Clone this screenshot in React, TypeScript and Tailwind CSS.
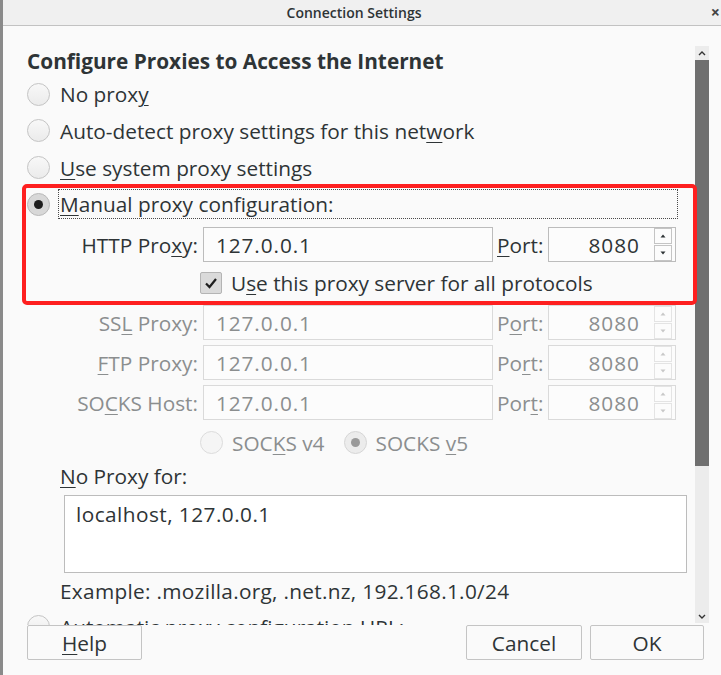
import React from "react";

const FONT = "font-['Open_Sans','Noto_Sans',sans-serif]";

function M({ children }: { children: React.ReactNode }) {
  return <span className="underline decoration-1 underline-offset-[3px]">{children}</span>;
}

function Radio({ checked = false, disabled = false }: { checked?: boolean; disabled?: boolean }) {
  const skin = disabled
    ? checked
      ? "border-[#d6d6d6] bg-[#ececec]"
      : "border-[#dcdcdc] bg-[#f5f5f5]"
    : checked
      ? "border-[#b9b9b9] bg-[#d8d8d8]"
      : "border-[#c4c4c4] bg-linear-to-b from-[#f8f8f8] to-[#ebebeb]";
  return (
    <span className={`flex h-[23px] w-[23px] shrink-0 items-center justify-center rounded-full border ${skin}`}>
      {checked && (
        <span className={`h-[9px] w-[9px] rounded-full ${disabled ? "bg-[#9a9a9a]" : "bg-[#1e1e1e]"}`} />
      )}
    </span>
  );
}

function Spin({ disabled }: { disabled: boolean }) {
  const box = disabled ? "border-[#e4e4e4] text-[#c8c8c8]" : "border-[#c4c4c4] text-[#2e3436]";
  return (
    <div className="flex w-[18px] flex-col gap-px">
      <div className={`flex h-[16px] items-center justify-center border bg-[#fcfcfc] ${box}`}>
        <svg width="6" height="4" viewBox="0 0 6 4">
          <path d="M3 0.5 L5.5 3.5 H0.5 Z" fill="currentColor" />
        </svg>
      </div>
      <div className={`flex h-[16px] items-center justify-center border bg-[#fcfcfc] ${box}`}>
        <svg width="6" height="4" viewBox="0 0 6 4">
          <path d="M0.5 0.5 H5.5 L3 3.5 Z" fill="currentColor" />
        </svg>
      </div>
    </div>
  );
}

function ProxyRow({
  label,
  port,
  disabled = false,
}: {
  label: React.ReactNode;
  port: React.ReactNode;
  disabled?: boolean;
}) {
  const txt = disabled ? "text-[#8b8e8f]" : "text-[#2e3436]";
  const border = disabled ? "border-[#dadada]" : "border-[#bcbcbc]";
  return (
    <div className={`flex h-[35px] shrink-0 items-center ${txt}`}>
      <div className="w-[171px] whitespace-nowrap text-right">{label}</div>
      <div className={`ml-[5px] flex h-full w-[290px] items-center border bg-[#fcfcfc] pl-[12px] tracking-[0.9px] ${border}`}>
        127.0.0.1
      </div>
      <div className="ml-[4px] w-[46px] whitespace-nowrap">{port}</div>
      <div className={`ml-[5px] flex h-full w-[128px] items-center border bg-[#fcfcfc] pr-[3px] ${border}`}>
        <span className="flex-1 pr-[14px] text-right tracking-[1px]">8080</span>
        <Spin disabled={disabled} />
      </div>
    </div>
  );
}

function RadioRow({ h, children }: { h: string; children: React.ReactNode }) {
  return (
    <div className={`flex shrink-0 items-center gap-[10px] ${h}`}>
      <Radio />
      <span className="whitespace-nowrap">{children}</span>
    </div>
  );
}

function Button({ w, children }: { w: string; children: React.ReactNode }) {
  return (
    <button
      type="button"
      className={`flex h-[35px] items-center justify-center rounded-[2px] border border-[#c4c4c4] bg-[#fafafa] text-[#2e3436] ${w}`}
    >
      {children}
    </button>
  );
}

export default function App() {
  return (
    <div className={`relative flex h-[675px] w-[721px] overflow-hidden bg-[#fafafa] text-[20.8px] leading-[24px] text-[#2e3436] ${FONT}`}>
      <div className="w-[3px] shrink-0 bg-[#8a8a8a]" />

      <div className="flex min-w-0 flex-1 flex-col">
        <div className="relative flex h-[26px] shrink-0 items-center justify-center border-b border-[#c2c2c2] bg-[#f0f0f0] pr-[16px]">
          <span className="text-[14px] font-semibold text-[#2e3436]">Connection Settings</span>
          <span className="absolute right-[1px] top-[2px] text-[16px] font-bold leading-[20px] text-[#444]">×</span>
        </div>

        <div className="flex h-[599px] shrink-0">
          <div className="flex min-w-0 flex-1 flex-col overflow-hidden pl-[24px] pt-[20px]">
            <h1 className="flex h-[30px] shrink-0 items-center whitespace-nowrap text-[20.8px] font-bold">
              Configure Proxies to Access the Internet
            </h1>
            <RadioRow h="h-[36px]">
              No prox<M>y</M>
            </RadioRow>
            <RadioRow h="h-[37px]">
              Auto-detect proxy settings for this net<M>w</M>ork
            </RadioRow>
            <RadioRow h="h-[37px]">
              <M>U</M>se system proxy settings
            </RadioRow>

            <div className="flex h-[36px] shrink-0 items-center">
              <Radio checked />
              <span className="ml-[8px] flex h-[30px] w-[620px] items-center border border-dotted border-[#4a4a4a] pl-[1px]">
                <M>M</M>anual proxy configuration:
              </span>
            </div>

            <div className="mt-[5px] flex shrink-0 flex-col">
              <ProxyRow
                label={
                  <>
                    HTTP Pro<M>x</M>y:
                  </>
                }
                port={
                  <>
                    <M>P</M>ort:
                  </>
                }
              />
              <div className="mb-[11px] mt-[9px] flex h-[23px] shrink-0 items-center pl-[173px]">
                <span className="flex h-[22px] w-[22px] items-center justify-center rounded-[2px] border border-[#b4b4b4] bg-[#dadada]">
                  <svg width="14" height="12" viewBox="0 0 14 12">
                    <path d="M2 6.5 L5.5 10 L12 2" fill="none" stroke="#1e1e1e" strokeWidth="2.2" />
                  </svg>
                </span>
                <span className="ml-[9px] whitespace-nowrap">
                  U<M>s</M>e this proxy server for all protocols
                </span>
              </div>
              <div className="flex shrink-0 flex-col gap-[5px]">
                <ProxyRow
                  disabled
                  label={
                    <>
                      SS<M>L</M> Proxy:
                    </>
                  }
                  port={
                    <>
                      P<M>o</M>rt:
                    </>
                  }
                />
                <ProxyRow
                  disabled
                  label={
                    <>
                      <M>F</M>TP Proxy:
                    </>
                  }
                  port={
                    <>
                      Po<M>r</M>t:
                    </>
                  }
                />
                <ProxyRow
                  disabled
                  label={
                    <>
                      SO<M>C</M>KS Host:
                    </>
                  }
                  port={
                    <>
                      Por<M>t</M>:
                    </>
                  }
                />
              </div>
              <div className="mt-[11px] flex h-[23px] shrink-0 items-center pl-[173px] text-[#8b8e8f]">
                <Radio disabled />
                <span className="ml-[9px] whitespace-nowrap">
                  SOC<M>K</M>S v4
                </span>
                <span className="ml-[19px]">
                  <Radio checked disabled />
                </span>
                <span className="ml-[9px] whitespace-nowrap">
                  SOCKS <M>v</M>5
                </span>
              </div>
            </div>

            <div className="mt-[10px] h-[24px] shrink-0 pl-[33px]">
              <M>N</M>o Proxy for:
            </div>
            <div className="ml-[37px] mt-[7px] h-[78px] w-[623px] shrink-0 border border-[#bcbcbc] bg-white px-[11px] pt-[6px] tracking-[0.45px]">
              localhost, 127.0.0.1
            </div>
            <div className="mt-[6px] h-[24px] shrink-0 whitespace-nowrap pl-[33px] tracking-[0.3px]">
              Example: .mozilla.org, .net.nz, 192.168.1.0/24
            </div>
            <div className="mt-[12px] flex h-[23px] shrink-0 items-center gap-[10px]">
              <Radio />
              <span className="whitespace-nowrap">Automatic proxy configuration URL:</span>
            </div>
          </div>

          <div className="mb-[2px] mr-[12px] mt-[20px] flex w-[14px] shrink-0 flex-col bg-[#ececec]">
            <div className="flex h-[14px] items-center justify-center">
              <svg width="8" height="5" viewBox="0 0 8 5">
                <path d="M1 4 L4 1 L7 4" fill="none" stroke="#333" strokeWidth="1.4" />
              </svg>
            </div>
            <div className="h-[406px] bg-[#6f6f6f]" />
            <div className="flex-1" />
            <div className="flex h-[13px] items-center justify-center">
              <svg width="8" height="5" viewBox="0 0 8 5">
                <path d="M1 1 L4 4 L7 1" fill="none" stroke="#333" strokeWidth="1.4" />
              </svg>
            </div>
          </div>
        </div>

        <div className="flex h-[35px] shrink-0 items-center pl-[24px]">
          <Button w="w-[115px]">
            <M>H</M>elp
          </Button>
          <div className="flex-1" />
          <Button w="w-[116px]">Cancel</Button>
          <div className="w-[8px]" />
          <Button w="w-[114px]">OK</Button>
          <div className="w-[17px]" />
        </div>
      </div>

      <div className="pointer-events-none absolute left-[22px] top-[184px] h-[121px] w-[675px] rounded-[5px] border-[4px] border-[#fe1f1f]" />
    </div>
  );
}
